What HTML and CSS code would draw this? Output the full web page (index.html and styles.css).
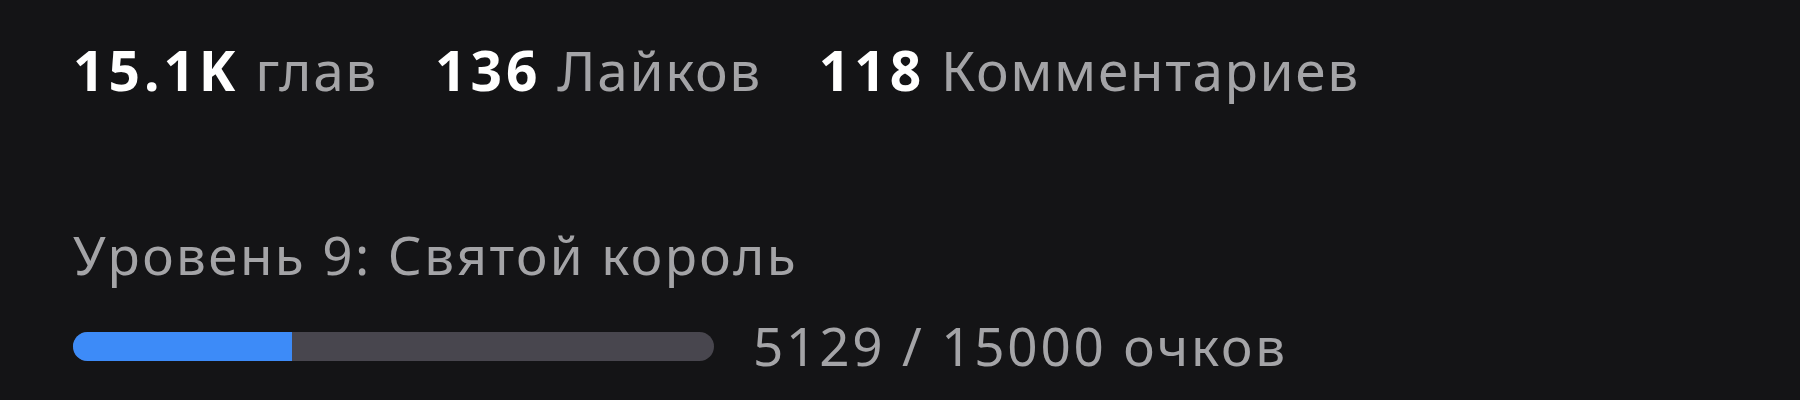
FILE: index.html
```html
<!DOCTYPE html>
<html>

<head>
    <link rel="stylesheet" href="styles.css">
</head>

<body>
    <div class="profile">
        <div class="stats">
            <span class="stat"><b>15.1K</b> глав</span>
            <span class="stat"><b>136</b> Лайков</span>
            <span class="stat"><b>118</b> Комментариев</span>
        </div>

        <div class="level">Уровень 9: Святой король</div>

        <div class="progress">
            <div class="track">
                <div class="fill" style="width: 34.19%"></div>
            </div>
            <span class="points">5129 / 15000 очков</span>
        </div>
    </div>
</body>

</html>
```

FILE: styles.css
```css
body {
    margin: 0;
    background-color: #141416;
    font-family: 'Noto Sans', 'DejaVu Sans', sans-serif;
    color: #a4a4a7;
}

.profile {
    padding: 32px 0 0 73px;
}

.stats {
    display: flex;
    gap: 57px;
    font-size: 55px;
    line-height: 76px;
    letter-spacing: 1.6px;
}

.stat b {
    color: #ffffff;
    font-weight: 700;
    letter-spacing: 4px;
}

.level {
    margin-top: 112px;
    font-size: 53px;
    line-height: 70px;
    letter-spacing: 2.4px;
}

.progress {
    display: flex;
    align-items: center;
    gap: 39px;
    margin-top: 21px;
}

.track {
    width: 641px;
    height: 29px;
    border-radius: 15px;
    background-color: #48464e;
    overflow: hidden;
}

.fill {
    height: 100%;
    background-color: #3d8bf8;
}

.points {
    font-size: 53px;
    line-height: 70px;
    letter-spacing: 2.8px;
}
```
